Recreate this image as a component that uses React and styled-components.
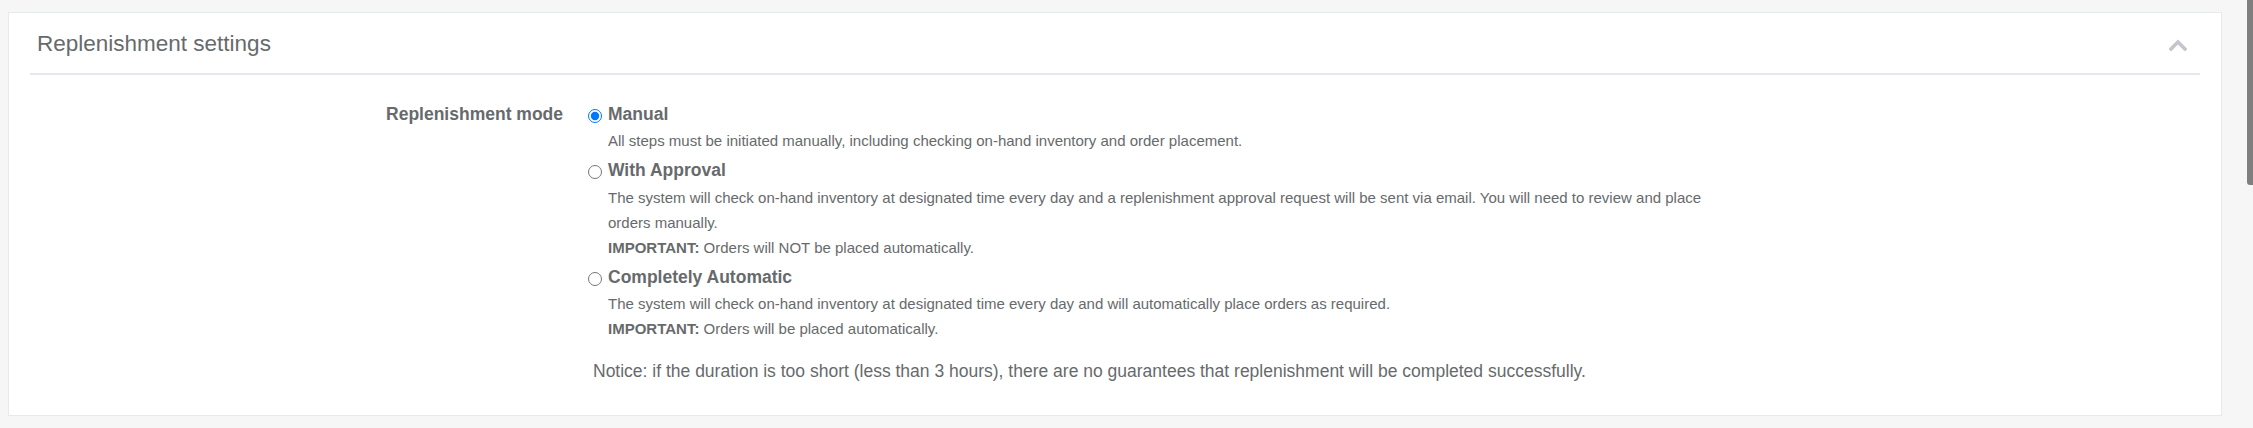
import React from 'react';
import styled, { createGlobalStyle } from 'styled-components';

const GlobalStyle = createGlobalStyle`
  html, body {
    margin: 0;
    padding: 0;
    height: 100%;
    overflow: hidden;
    background: #f6f6f6;
    font-family: "Liberation Sans", Arial, sans-serif;
    color: #676a6c;
  }
`;

const Page = styled.div`
  padding: 12px 31px 0 8px;
`;

const Panel = styled.section`
  background: #ffffff;
  border: 1px solid #e7eaec;
  padding: 0 21px;
`;

const PanelHeader = styled.header`
  box-sizing: border-box;
  height: 62px;
  display: flex;
  align-items: center;
  justify-content: space-between;
  border-bottom: 2px solid #e5e8ec;
`;

const PanelTitle = styled.h2`
  margin: 2px 0 0 7px;
  font-size: 22.5px;
  font-weight: 400;
  line-height: 30px;
  color: #676a6c;
`;

const CollapseButton = styled.button`
  display: flex;
  align-items: center;
  justify-content: center;
  margin: 4px 13px 0 0;
  padding: 0;
  border: 0;
  background: none;
  cursor: pointer;
`;

const PanelBody = styled.div`
  display: grid;
  grid-template-columns: 533px 1fr;
  column-gap: 25px;
  padding: 27px 0 31px;
`;

const FieldLabel = styled.label`
  font-size: 17.5px;
  font-weight: 700;
  line-height: 25px;
  text-align: right;
`;

const FieldControls = styled.div`
  display: flex;
  flex-direction: column;
`;

const OptionList = styled.div`
  display: flex;
  flex-direction: column;
  gap: 5px;
`;

const Option = styled.div`
  display: flex;
  flex-direction: column;
`;

const OptionHead = styled.label`
  display: flex;
  align-items: flex-start;
  cursor: pointer;
`;

const Radio = styled.input.attrs({ type: 'radio' })`
  width: 14px;
  height: 14px;
  margin: 7px 6px 0 0;
  accent-color: #0075ff;
  flex: none;
`;

const OptionTitle = styled.span`
  font-size: 17.5px;
  font-weight: 700;
  line-height: 25px;
`;

const OptionDesc = styled.div`
  max-width: 1100px;
  margin-top: ${(p) => p.$gap || 1}px;
  padding-left: 20px;
  font-size: 15px;
  line-height: 25px;

  p {
    margin: 0;
  }

  strong {
    font-weight: 700;
  }
`;

const Notice = styled.p`
  margin: 18px 0 0;
  padding-left: 5px;
  font-size: 17.5px;
  line-height: 25px;
`;

const ScrollThumb = styled.div`
  position: fixed;
  top: 0;
  right: 0;
  width: 6px;
  height: 185px;
  background: #7f7f7f;
  border-bottom-left-radius: 3px;
`;

const ChevronUp = () => (
  <svg width="18" height="12" viewBox="0 0 18 12" aria-hidden="true">
    <polyline
      points="2,10 9,3 16,10"
      fill="none"
      stroke="#c3c7cd"
      strokeWidth="3.6"
      strokeLinecap="square"
    />
  </svg>
);

const options = [
  {
    id: 'manual',
    title: 'Manual',
    checked: true,
    lines: [
      'All steps must be initiated manually, including checking on-hand inventory and order placement.',
    ],
  },
  {
    id: 'approval',
    title: 'With Approval',
    gap: 2,
    lines: [
      'The system will check on-hand inventory at designated time every day and a replenishment approval request will be sent via email. You will need to review and place orders manually.',
    ],
    important: 'Orders will NOT be placed automatically.',
  },
  {
    id: 'automatic',
    title: 'Completely Automatic',
    lines: [
      'The system will check on-hand inventory at designated time every day and will automatically place orders as required.',
    ],
    important: 'Orders will be placed automatically.',
  },
];

const App = () => {
  return (
    <>
      <GlobalStyle />
      <Page>
        <Panel>
          <PanelHeader>
            <PanelTitle>Replenishment settings</PanelTitle>
            <CollapseButton aria-label="Collapse">
              <ChevronUp />
            </CollapseButton>
          </PanelHeader>
          <PanelBody>
            <FieldLabel>Replenishment mode</FieldLabel>
            <FieldControls>
              <OptionList>
                {options.map((o) => (
                  <Option key={o.id}>
                    <OptionHead>
                      <Radio name="mode" value={o.id} defaultChecked={o.checked} />
                      <OptionTitle>{o.title}</OptionTitle>
                    </OptionHead>
                    <OptionDesc $gap={o.gap}>
                      {o.lines.map((l) => (
                        <p key={l}>{l}</p>
                      ))}
                      {o.important && (
                        <p>
                          <strong>IMPORTANT:</strong> {o.important}
                        </p>
                      )}
                    </OptionDesc>
                  </Option>
                ))}
              </OptionList>
              <Notice>
                Notice: if the duration is too short (less than 3 hours), there are no guarantees that replenishment will be completed successfully.
              </Notice>
            </FieldControls>
          </PanelBody>
        </Panel>
      </Page>
      <ScrollThumb />
    </>
  );
};

export default App;
